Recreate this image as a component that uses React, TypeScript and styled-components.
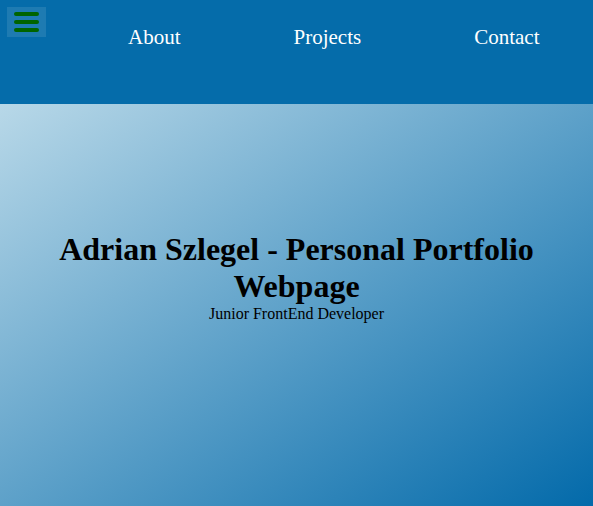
import React from "react";
import styled, { createGlobalStyle } from "styled-components";

const GlobalStyle = createGlobalStyle`
  html, body {
    margin: 0;
    padding: 0;
  }
  body {
    font-family: "Liberation Serif", "Times New Roman", serif;
    background: #ffffff;
  }
`;

const Page = styled.div`
  display: flex;
  flex-direction: column;
  height: 506px;
  overflow: hidden;
`;

const Header = styled.header`
  display: flex;
  align-items: flex-start;
  height: 104px;
  flex-shrink: 0;
  background: #056caa;
  padding: 7px 0 0 7px;
  box-sizing: border-box;
`;

const MenuButton = styled.button`
  width: 39px;
  height: 30px;
  border: none;
  padding: 0;
  background: rgba(255, 255, 255, 0.1);
  display: flex;
  flex-direction: column;
  align-items: center;
  justify-content: center;
  gap: 4px;
  cursor: pointer;
`;

const Bar = styled.span`
  display: block;
  width: 25px;
  height: 4px;
  border-radius: 2px;
  background: #006400;
`;

const NavList = styled.ul`
  display: flex;
  list-style: none;
  gap: 113px;
  margin: 18px 0 0 82px;
  padding: 0;

  & a {
    color: #ffffff;
    font-size: 21px;
    text-decoration: none;
  }
`;

const Hero = styled.main`
  flex: 1;
  display: flex;
  flex-direction: column;
  align-items: center;
  padding-top: 127px;
  text-align: center;
  background: linear-gradient(to bottom right, #b8d8e8, #036aaa);
`;

const Title = styled.h1`
  margin: 0;
  font-size: 32px;
  font-weight: bold;
  color: #000000;
  max-width: 500px;
`;

const Subtitle = styled.p`
  margin: 0;
  font-size: 16px;
  color: #000000;
`;

const App = () => {
  return (
    <Page>
      <GlobalStyle />
      <Header>
        <MenuButton aria-label="menu">
          <Bar />
          <Bar />
          <Bar />
        </MenuButton>
        <NavList>
          <li>
            <a href="#about">About</a>
          </li>
          <li>
            <a href="#projects">Projects</a>
          </li>
          <li>
            <a href="#contact">Contact</a>
          </li>
        </NavList>
      </Header>
      <Hero>
        <Title>Adrian Szlegel - Personal Portfolio Webpage</Title>
        <Subtitle>Junior FrontEnd Developer</Subtitle>
      </Hero>
    </Page>
  );
};

export default App;
